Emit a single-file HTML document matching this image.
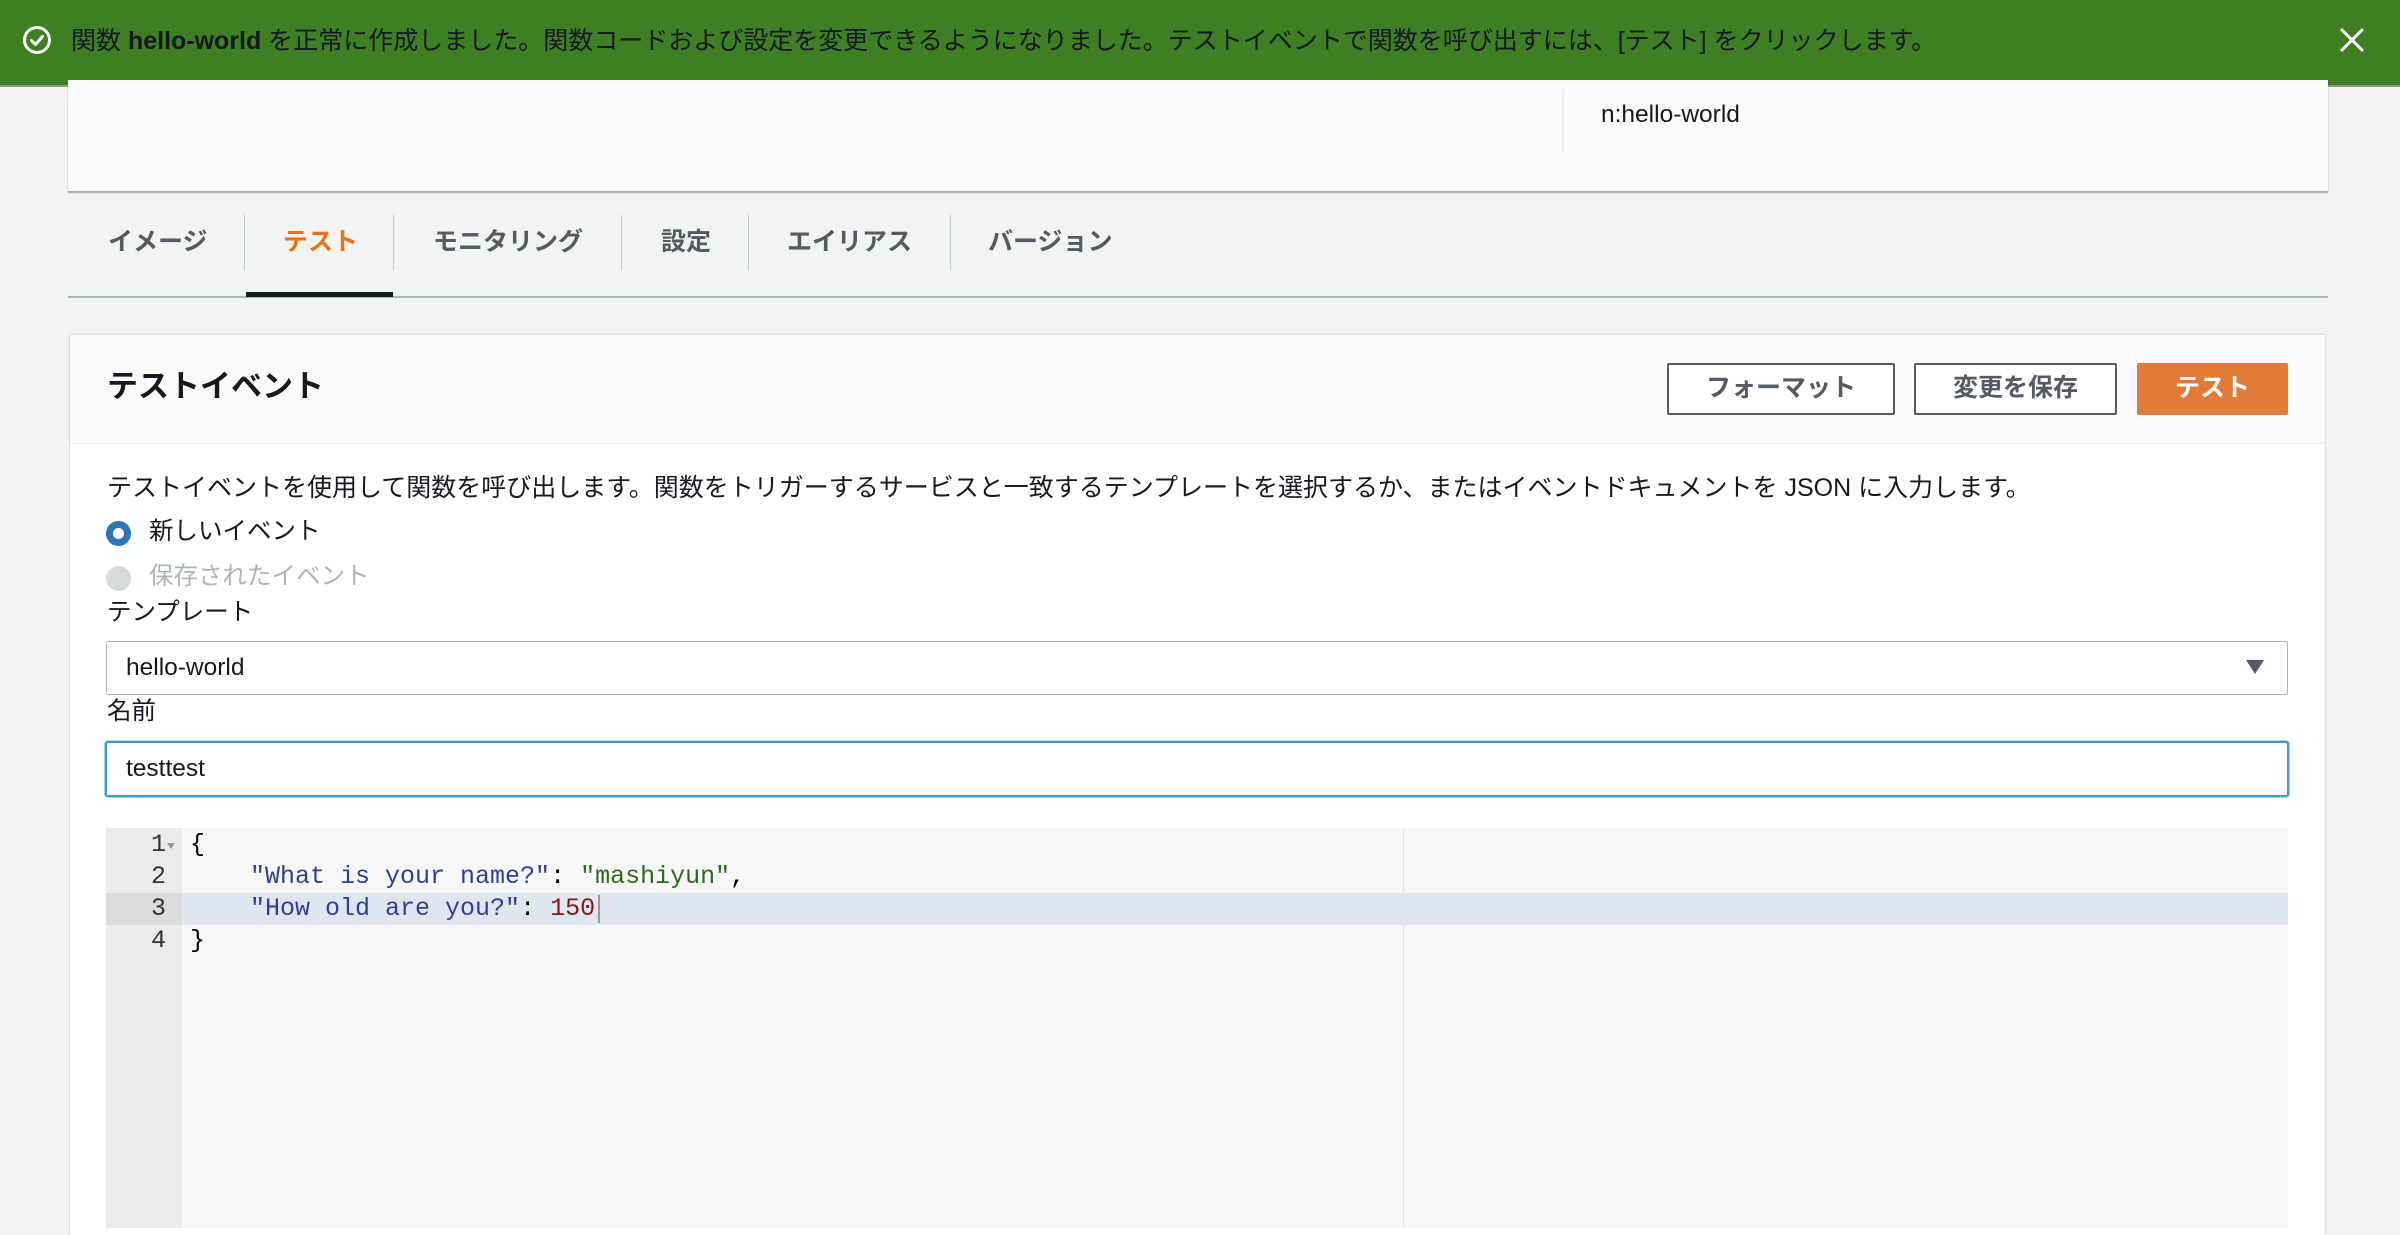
<!DOCTYPE html>
<html><head><meta charset="utf-8"><style>
*{box-sizing:border-box;margin:0;padding:0}
body{width:2400px;height:1206px;overflow:hidden;background:#f2f3f3;font-family:"Liberation Sans","Noto Sans CJK JP",sans-serif;color:#16191f;position:relative}
.abs{position:absolute}
.banner{left:0;top:0;width:2400px;height:87px;background:#3f7f24;color:#fff;border-bottom:2px solid #8a9a80}
.btxt{left:71px;top:23px;font-size:25px;white-space:nowrap;line-height:36px}
.card{left:68px;top:80px;width:2260px;height:111px;background:#fafafa;box-shadow:0 2px 1px rgba(0,28,36,.35)}
.tab{top:224px;font-size:25px;font-weight:bold;color:#545b64;white-space:nowrap;line-height:36px}
.sep{top:215px;width:1px;height:55px;background:#c6cbcb}
.panel{left:70px;top:335px;width:2255px;height:900px;background:#fff;box-shadow:0 0 1px 1px #d5dbdb}
.phead{left:70px;top:335px;width:2255px;height:109px;background:#fafafa;border-bottom:1px solid #eaeded}
.btn{top:363px;height:52px;border:2px solid #545b64;border-radius:2px;background:#fff;font-size:25px;font-weight:bold;color:#545b64;text-align:center;line-height:47px}
.t24{font-size:24.5px;line-height:34px;white-space:nowrap}
.code{font-family:"Liberation Mono",monospace;font-size:25px;line-height:32px;white-space:pre}
</style></head><body>
<div class="abs banner"></div>
<svg class="abs" style="left:22px;top:25px" width="30" height="30" viewBox="0 0 30 30"><circle cx="15" cy="15" r="12.5" fill="none" stroke="#fff" stroke-width="3"/><path d="M9.5 15.5l4 4 7-8" fill="none" stroke="#fff" stroke-width="3" stroke-linecap="round" stroke-linejoin="round"/></svg>
<div class="abs btxt">関数 <b>hello-world</b> を正常に作成しました。関数コードおよび設定を変更できるようになりました。テストイベントで関数を呼び出すには、[テスト] をクリックします。</div>
<svg class="abs" style="left:2339px;top:27px" width="26" height="26" viewBox="0 0 26 26"><path d="M2 2L24 24M24 2L2 24" stroke="#fff" stroke-width="3"/></svg>

<div class="abs card"></div>
<div class="abs" style="left:1562px;top:89px;width:2px;height:64px;background:#eaeded"></div>
<div class="abs t24" style="left:1601px;top:98px">n:hello-world</div>

<div class="abs tab" style="left:108px">イメージ</div>
<div class="abs sep" style="left:244px"></div>
<div class="abs tab" style="left:283px;color:#ec7211">テスト</div>
<div class="abs sep" style="left:393px"></div>
<div class="abs tab" style="left:433px">モニタリング</div>
<div class="abs sep" style="left:621px"></div>
<div class="abs tab" style="left:661px">設定</div>
<div class="abs sep" style="left:748px"></div>
<div class="abs tab" style="left:787px">エイリアス</div>
<div class="abs sep" style="left:950px"></div>
<div class="abs tab" style="left:988px">バージョン</div>
<div class="abs" style="left:68px;top:296px;width:2260px;height:2px;background:#aab7b8"></div>
<div class="abs" style="left:246px;top:292px;width:147px;height:5px;background:#16191f"></div>

<div class="abs panel"></div>
<div class="abs phead"></div>
<div class="abs" style="left:107px;top:366px;font-size:31px;font-weight:bold;line-height:42px">テストイベント</div>
<div class="abs btn" style="left:1667px;width:228px">フォーマット</div>
<div class="abs btn" style="left:1914px;width:203px">変更を保存</div>
<div class="abs btn" style="left:2137px;width:151px;background:#e27b37;border-color:#e27b37;color:#fff">テスト</div>

<div class="abs t24" style="left:107px;top:471px;font-size:25px">テストイベントを使用して関数を呼び出します。関数をトリガーするサービスと一致するテンプレートを選択するか、またはイベントドキュメントを JSON に入力します。</div>
<div class="abs" style="left:106px;top:521px;width:25px;height:25px;border-radius:50%;border:7px solid #2f73bb;background:#fff"></div>
<div class="abs t24" style="left:149px;top:515px">新しいイベント</div>
<div class="abs" style="left:106px;top:566px;width:25px;height:25px;border-radius:50%;background:#d5dbdb"></div>
<div class="abs t24" style="left:149px;top:560px;color:#aab7b8">保存されたイベント</div>
<div class="abs t24" style="left:107px;top:596px">テンプレート</div>
<div class="abs" style="left:106px;top:641px;width:2182px;height:54px;border:1px solid #aab7b8;border-radius:2px;background:#fff"></div>
<div class="abs t24" style="left:126px;top:651px">hello-world</div>
<svg class="abs" style="left:2245px;top:659px" width="20" height="16" viewBox="0 0 20 16"><path d="M1 1H19L10 15Z" fill="#545b64"/></svg>
<div class="abs t24" style="left:107px;top:695px">名前</div>
<div class="abs" style="left:105px;top:741px;width:2184px;height:56px;border:2px solid #3f9bc9;border-radius:3px;background:#fff;box-shadow:0 0 0 1px #a6d4ea"></div>
<div class="abs t24" style="left:126px;top:752px">testtest</div>

<div class="abs" style="left:106px;top:828px;width:2182px;height:400px;background:#f7f7f7"></div>
<div class="abs" style="left:106px;top:828px;width:76px;height:400px;background:#ebebeb"></div>
<div class="abs" style="left:182px;top:893px;width:2106px;height:32px;background:#e0e6f0"></div>
<div class="abs" style="left:106px;top:893px;width:76px;height:32px;background:#dcdcdc"></div>
<div class="abs" style="left:1403px;top:828px;width:1px;height:400px;background:#e3e3e3"></div>
<div class="abs code" style="left:106px;top:829px;width:60px;text-align:right;color:#333">1
2
3
4</div>
<svg class="abs" style="left:166px;top:842px" width="10" height="8" viewBox="0 0 10 8"><path d="M1 1H9L5 7Z" fill="#999"/></svg>
<div class="abs code" style="left:190px;top:829px;color:#000">{
    <span style="color:#2f3f96">"What is your name?"</span>: <span style="color:#2b6b1c">"mashiyun"</span>,
    <span style="color:#2f3f96">"How old are you?"</span>: <span style="color:#7e1c1c">150</span>
}</div>
<div class="abs" style="left:598px;top:895px;width:2px;height:28px;background:#999"></div>
</body></html>
